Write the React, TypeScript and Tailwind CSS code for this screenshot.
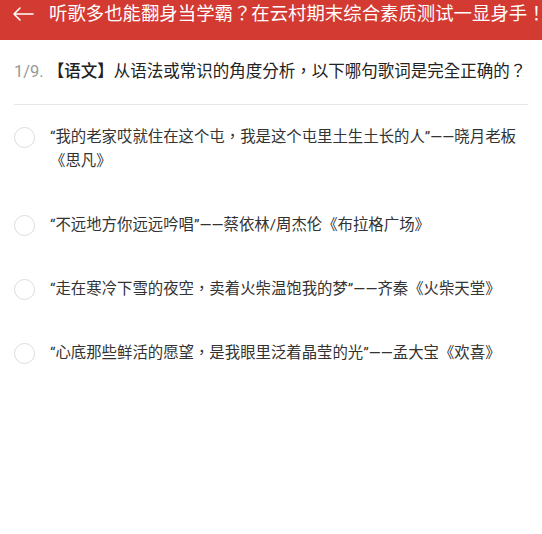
import React from "react";

const FONT = { fontFamily: 'Roboto, "Noto Sans CJK TC", "Noto Sans CJK SC", sans-serif' };

const options = [
  "“我的老家哎就住在这个屯，我是这个屯里土生土长的人”——晓月老板《思凡》",
  "“不远地方你远远吟唱”——蔡依林/周杰伦《布拉格广场》",
  "“走在寒冷下雪的夜空，卖着火柴温饱我的梦”——齐秦《火柴天堂》",
  "“心底那些鲜活的愿望，是我眼里泛着晶莹的光”——孟大宝《欢喜》",
];

export default function App() {
  return (
    <div className="w-[542px] h-[534px] bg-white overflow-hidden" style={FONT}>
      <div className="h-[40px] bg-[#d33a31] flex items-center pb-[13px] overflow-hidden">
        <svg
          className="ml-[12px] shrink-0"
          width="22"
          height="22"
          viewBox="0 0 22 22"
          fill="none"
          stroke="white"
          strokeWidth="1.6"
          strokeLinecap="round"
          strokeLinejoin="round"
        >
          <path d="M21 11H2M8 5L2 11L8 17" />
        </svg>
        <div className="ml-[15px] text-white text-[18.4px] leading-[27px] whitespace-nowrap">
          听歌多也能翻身当学霸？在云村期末综合素质测试一显身手！
        </div>
      </div>
      <div className="mx-[14px] border-b border-[#e6e6e6] pt-[20px] pb-[20px]">
        <div className="text-[16.5px] leading-[24px] text-[#222] whitespace-nowrap">
          <span className="text-[#999]">1/9. </span>
          <span className="font-medium">【语文】</span>
          从语法或常识的角度分析，以下哪句歌词是完全正确的？
        </div>
      </div>
      <div className="flex flex-col">
        {options.map((o, i) => (
          <div key={i} className="flex items-start py-[20px] pl-[14px] pr-[14px]">
            <div className="mt-[2px] w-[21px] h-[21px] rounded-full border border-[#dcdcdc] shrink-0" />
            <div className="ml-[15px] text-[15.4px] leading-[24px] text-[#333]">{o}</div>
          </div>
        ))}
      </div>
    </div>
  );
}
